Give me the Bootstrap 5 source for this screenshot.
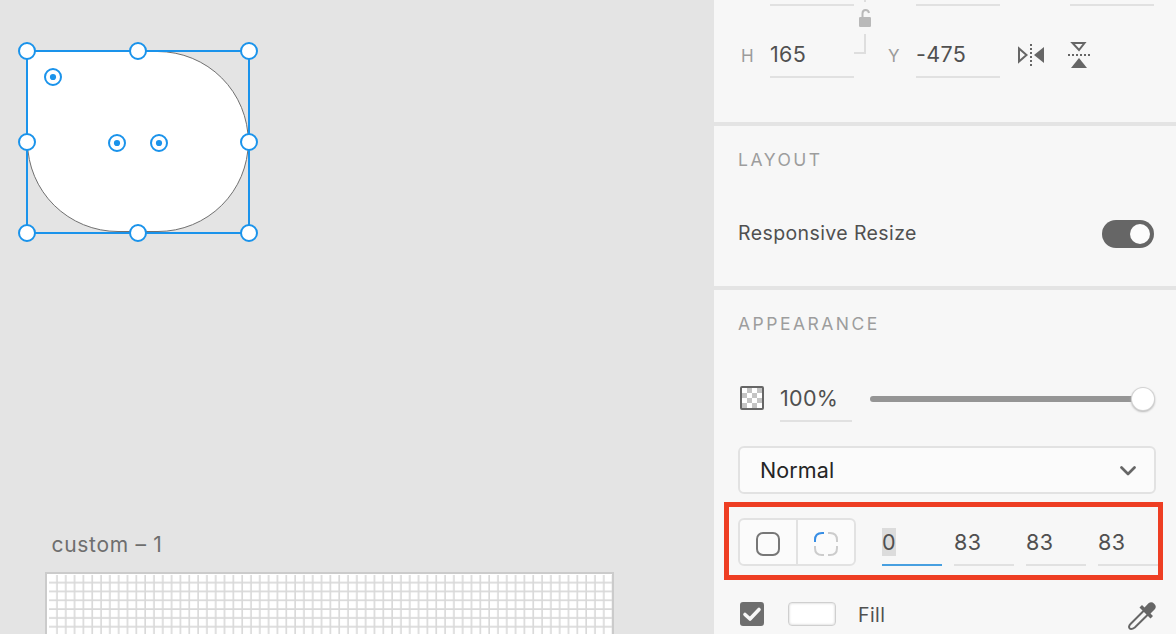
<!DOCTYPE html>
<html lang="en">
<head>
<meta charset="utf-8">
<title>Design editor</title>
<link href="https://cdn.jsdelivr.net/npm/bootstrap@5.3.0/dist/css/bootstrap.min.css" rel="stylesheet">
<style>
body{font-family:Inter,"Liberation Sans",sans-serif;font-size:21.5px;line-height:28px;color:#505050;background:#e4e4e4}
.workspace{width:1176px;height:634px}
.stage{width:714px;background:#e4e4e4}
.stage-name{font-size:21px;letter-spacing:.7px;color:#6e6e6e;padding-left:51.5px;margin-top:281px}
.inspector{width:462px}
.pane{background:#f7f7f7;padding:0 20px 0 24px;margin-bottom:4px}
.pane-transform{height:122px}
.pane-layout{height:160px}
.pane-look{height:344px;margin-bottom:0}
.pane-title{font-size:17.5px;line-height:24px;letter-spacing:2.5px;color:#9d9d9d;font-weight:400;margin:0}
.value{border-bottom:2px solid #e1e1e1;width:84px;flex:none;letter-spacing:.3px;white-space:nowrap}
.axis{color:#9b9b9b;font-size:17px;flex:none}
.corner{width:60px;height:38px;line-height:28px;margin-right:12px;letter-spacing:.5px}
.corner.editing{border-color:#479fe0}
.corner.editing span{background:#dcdcdc;display:block;width:14px;height:28px}
.switch{width:52px;height:28px;border-radius:14px;background:#666;padding:4px}
.switch i{width:20px;height:20px;border-radius:50%;background:#fcfcfc}
.track{height:6px;border-radius:3px;background:#959595}
.thumb{width:22px;height:22px;right:0;top:-8px;background:#fff;box-shadow:0 0 0 1px #d3d3d3,0 1px 2px 1px #b8b8b8}
.blend{height:48px;border:2px solid #e2e2e2;border-radius:6px;background:#fbfbfb;color:#252525;padding:0 18px 0 20px;margin-top:24px;letter-spacing:.1px}
.modes{width:118px;height:48px;border:2px solid #e2e2e2;border-radius:6px;background:#fbfbfb;margin-right:26px}
.modes>span{width:58px}
.modes>span:first-child{width:59px;border-right:2px solid #e2e2e2}
.callout{left:-14px;top:-16px;width:439px;height:78px;border:5px solid #ee3e23}
.swatch{width:48px;height:24px;border:1.5px solid #cfcfcf;border-radius:4px;background:#fff;box-shadow:inset 0 0 2px 1px #e6e6e6;margin:0 22px 0 24px}
svg{display:block;flex:none}
</style>
<script src="https://cdn.jsdelivr.net/npm/bootstrap@5.3.0/dist/js/bootstrap.bundle.min.js"></script>
</head>
<body class="overflow-hidden">
<div class="workspace d-flex overflow-hidden">
  <main class="stage flex-shrink-0">
    <svg width="714" height="250" viewBox="0 0 714 250" fill="none">
      <path d="M27.5 51.5H157.5A90.5 90.5 0 0 1 248.3 142 90.3 90 0 0 1 158 231.500H118A90.500 90 0 0 1 27.500 142Z" fill="#fff" stroke="#707070"/>
      <g stroke="#1a93eb" stroke-width="2" fill="#fff">
        <path d="M27 51H249V233H27Z" fill="none"/>
        <circle cx="27" cy="51" r="8"/><circle cx="138" cy="51" r="8"/><circle cx="249" cy="51" r="8"/>
        <circle cx="27" cy="142" r="8"/><circle cx="249" cy="142" r="8"/>
        <circle cx="27" cy="233" r="8"/><circle cx="138" cy="233" r="8"/><circle cx="249" cy="233" r="8"/>
        <circle cx="53" cy="77" r="8"/><circle cx="117" cy="143" r="8"/><circle cx="159" cy="143" r="8"/>
      </g>
      <g fill="#1a93eb"><circle cx="53" cy="77" r="3.1"/><circle cx="117" cy="143" r="3.1"/><circle cx="159" cy="143" r="3.1"/></g>
    </svg>
    <div class="stage-name">custom – 1</div>
    <svg width="714" height="75" viewBox="0 559 714 75">
      <defs><pattern id="grid" x="49" y="574.700" width="8.820" height="8.820" patternUnits="userSpaceOnUse"><path d="M8 0V8.820M0 8H8.820" stroke="#d9d9d9" stroke-width="1.640"/></pattern></defs>
      <path d="M46 640V573H613V640" fill="#fff"/>
      <path d="M49 575H612V640H49Z" fill="url(#grid)"/>
      <path d="M46 640V573H613V640" fill="none" stroke="#cbcbcb" stroke-width="2"/>
    </svg>
  </main>

  <aside class="inspector flex-shrink-0">
    <section class="pane pane-transform">
      <div class="d-flex">
        <div class="value" style="height:6px;margin-left:32px"></div>
        <div class="value" style="height:6px;margin-left:62px"></div>
        <div class="value" style="height:6px;margin-left:70px"></div>
      </div>
      <div class="d-flex align-items-start">
        <div class="axis" style="width:32px;padding:36px 0 0 3px">H</div>
        <div class="value" style="height:72px;padding-top:34px">165</div>
        <div class="position-relative" style="width:34px">
          <svg class="position-absolute" style="left:0;top:-6px" width="26" height="60" viewBox="0 0 26 60" fill="none">
            <path d="M11 0V2M11 34V53H0" stroke="#dedede" stroke-width="2"/>
            <path d="M8.500 18V13.500Q8.500 10 11.500 10T15 13" stroke="#b9b9b9" stroke-width="2"/>
            <rect x="5" y="17" width="12" height="10" rx="1.200" fill="#b9b9b9"/>
          </svg>
        </div>
        <div class="axis" style="width:28px;padding-top:36px">Y</div>
        <div class="value" style="height:72px;padding-top:34px">-475</div>
        <svg style="margin:36px 0 0 17px" width="30" height="26" viewBox="0 0 30 26" fill="none">
          <path d="M2 6.500V19.500L9.500 13Z" stroke="#666" stroke-width="2"/><path d="M14 2V25" stroke="#666" stroke-width="2" stroke-dasharray="2 2"/><path d="M27 5V21L17 13Z" fill="#666"/>
        </svg>
        <svg style="margin:36px 0 0 20px" width="24" height="28" viewBox="0 0 24 28" fill="none">
          <path d="M5.500 1H17.500L12 8Z" stroke="#666" stroke-width="2"/><path d="M1 13H24" stroke="#666" stroke-width="2" stroke-dasharray="2 2"/><path d="M4 26H20L12 16Z" fill="#666"/>
        </svg>
      </div>
    </section>

    <section class="pane pane-layout">
      <h2 class="pane-title" style="padding-top:22px">LAYOUT</h2>
      <div class="d-flex justify-content-between align-items-start" style="margin-top:48px;padding-right:2px">
        <span style="font-size:19.500px;line-height:26px;letter-spacing:.4px">Responsive Resize</span>
        <span class="switch d-flex justify-content-end" role="switch"><i></i></span>
      </div>
    </section>

    <section class="pane pane-look">
      <h2 class="pane-title" style="padding-top:22px">APPEARANCE</h2>
      <div class="d-flex" style="margin-top:48px;height:38px">
        <svg width="42" height="28" viewBox="0 0 42 28">
          <rect x="3" y="3" width="22" height="22" rx="1" fill="#fff"/>
          <path fill="#c4c4c4" d="M9 4h5v5h-5zM19 4h5v5h-5zM4 9h5v5h-5zM14 9h5v5h-5zM9 14h5v5h-5zM19 14h5v5h-5zM4 19h5v5h-5zM14 19h5v5h-5z"/>
          <rect x="3" y="3" width="22" height="22" rx="1" fill="none" stroke="#666" stroke-width="2"/>
        </svg>
        <div class="value" style="width:72px">100%</div>
        <div class="track position-relative flex-grow-1" style="margin:12px 2px 0 18px"><span class="thumb position-absolute rounded-circle"></span></div>
      </div>
      <div class="blend d-flex align-items-center justify-content-between"><span>Normal</span>
        <svg style="margin-top:2px" width="16" height="10" viewBox="0 0 16 10" fill="none"><path d="M1.500 1.500L8 8L14.500 1.500" stroke="#666" stroke-width="2.700" stroke-linecap="round" stroke-linejoin="round"/></svg>
      </div>
      <div class="d-flex position-relative" style="margin-top:24px;height:48px">
        <div class="modes d-flex flex-shrink-0">
          <span class="d-flex align-items-center justify-content-center"><svg width="24" height="24" viewBox="0 0 24 24" style="margin-top:4px"><rect x="1" y="1" width="22" height="22" rx="6" fill="none" stroke="#777" stroke-width="2"/></svg></span>
          <span class="d-flex align-items-center justify-content-center"><svg width="24" height="24" viewBox="0 0 24 24" style="margin-top:4px" fill="none" stroke-width="2"><path d="M1 10V8Q1 1 8 1H10" stroke="#378ee5"/><path d="M14 1H16Q23 1 23 8V10M23 14V16Q23 23 16 23H14M10 23H8Q1 23 1 16V14" stroke="#ccc"/></svg></span>
        </div>
        <div class="d-flex" style="padding-top:10px">
          <div class="value corner editing"><span>0</span></div>
          <div class="value corner">83</div>
          <div class="value corner">83</div>
          <div class="value corner">83</div>
        </div>
        <div class="callout position-absolute"></div>
      </div>
      <div class="d-flex align-items-start" style="margin-top:36px;height:32px">
        <svg style="margin-left:2px" width="24" height="24" viewBox="0 0 24 24"><rect width="24" height="24" rx="3" fill="#6e6e6e"/><path d="M5 12.500L10 17L19 7.500" fill="none" stroke="#f7f7f7" stroke-width="3.600" stroke-linecap="round" stroke-linejoin="round"/></svg>
        <span class="swatch"></span>
        <span style="margin-top:-1px;font-size:19.500px;letter-spacing:.4px">Fill</span>
        <svg class="ms-auto" width="30" height="30" viewBox="0 0 30 30">
          <path d="M18 8.500L5 21.500Q2 24.500 3.600 26.300T8.800 25.500L22 12.500" fill="#f7f7f7" stroke="#666" stroke-width="2"/>
          <path d="M13.500 5.500L16 3L18.500 5.500L22.500 1.300Q25.500 -1 28.200 1.700T29 7L24.500 11.500L27 14L24.500 16.500Z" fill="#666"/>
        </svg>
      </div>
    </section>
  </aside>
</div>
</body>
</html>
